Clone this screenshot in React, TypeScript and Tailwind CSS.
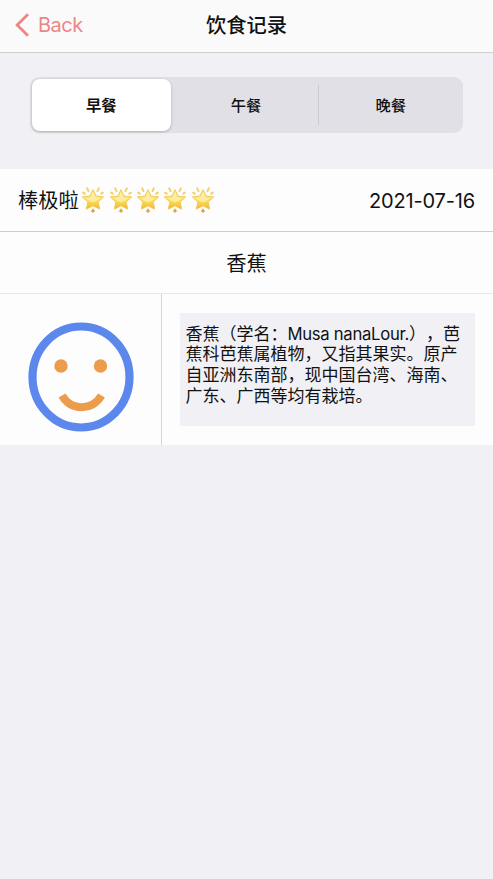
const meals = ['早餐', '午餐', '晚餐'];

const description = [
  <>香蕉（学名：<span className="text-[16.7px] tracking-[-0.3px]">Musa nanaLour.</span>），芭</>,
  '蕉科芭蕉属植物，又指其果实。原产',
  '自亚洲东南部，现中国台湾、海南、',
  '广东、广西等均有栽培。',
];

function GlowingStar() {
  return (
    <svg width="27.3" height="28" viewBox="0 0 27.3 28" className="shrink-0">
      <defs>
        <linearGradient id="star" x1="0" y1="0" x2="0" y2="1">
          <stop offset="0" stopColor="#fff0a0" />
          <stop offset="0.5" stopColor="#fce06a" />
          <stop offset="0.8" stopColor="#f8c93a" />
          <stop offset="1" stopColor="#e9a92e" />
        </linearGradient>
      </defs>
      <g stroke="#efd06a" strokeWidth="2" strokeLinecap="round">
        <path d="M7.2 2.4l1.3 2.7M18.8 2.4l-1.3 2.7M3.2 6.6l1.5 1M22.8 6.6l-1.5 1" />
      </g>
      <path d="M13 22.8l1.6 2.5q-1.6 2.1-3.2 0z" fill="#d9a73a" stroke="#d9a73a" strokeWidth=".8" />
      <path
        d="M13 3.6l3.1 6.4 7.5.9-5.4 5.1 1.5 7.2-6.7-3.5-6.7 3.5 1.5-7.2-5.4-5.1 7.5-.9z"
        fill="url(#star)"
        stroke="#f2cb55"
        strokeWidth="1"
        strokeLinejoin="round"
      />
      <path d="M13 6.5l2 5 5 .8-4 3-3 1.2-3-1.2-4-3 5-.8z" fill="#fff6c4" opacity=".6" />
    </svg>
  );
}

export default function App() {
  return (
    <div className="flex h-[879px] w-[493px] flex-col overflow-hidden bg-[#f0f0f5] font-[Inter,'Noto_Sans_CJK_SC',sans-serif] text-[#111] [text-spacing-trim:space-all]">
      <header className="grid h-[52.5px] shrink-0 grid-cols-[1fr_auto_1fr] items-center border-b border-[#cfcfd2] bg-[#fafafb]">
        <div className="flex items-center pb-[2px] pl-[15px] text-[#ed8685]">
          <svg width="15" height="24" viewBox="0 0 15 24" fill="none" stroke="currentColor" strokeWidth="2.8">
            <path d="M13 1.3L2.2 12 13 22.7" />
          </svg>
          <span className="ml-[8px] text-[20px] tracking-[-0.5px]">Back</span>
        </div>
        <h1 className="text-[20.3px] font-medium leading-[30px]">饮食记录</h1>
      </header>

      <div className="flex h-[116.5px] shrink-0 items-start px-[30px] pt-[24.5px]">
        <div className="flex h-[56px] w-[433px] rounded-[9px] bg-[#e1e0e6] text-[15.3px]">
          {meals.map((meal, i) => (
            <div key={meal} className="flex flex-1 items-center">
              <div
                className={
                  i === 0
                    ? 'ml-[2px] flex h-[52px] w-[138.5px] items-center justify-center rounded-[8px] bg-white pt-[2px] font-bold shadow-[0_1px_3px_rgba(0,0,0,0.22)]'
                    : 'flex flex-1 items-center justify-center pt-[2px] font-medium'
                }
              >
                {meal}
              </div>
              {i === 1 && <div className="h-[40px] w-px bg-[#cbcbd0]" />}
            </div>
          ))}
        </div>
      </div>

      <div className="flex h-[63px] shrink-0 items-center justify-between border-b border-[#cfcfd1] bg-[#fdfdfd] px-[18px]">
        <div className="flex items-center text-[20.3px]">
          <span className="pt-[2px]">棒极啦</span>
          <span className="ml-[1.5px] flex" role="img" aria-label="五星">
            {[0, 1, 2, 3, 4].map((n) => (
              <GlowingStar key={n} />
            ))}
          </span>
        </div>
        <span className="pt-px text-[20px] tracking-[-0.17px]">2021-07-16</span>
      </div>
      <div className="flex h-[62px] shrink-0 items-center justify-center border-b border-[#e7e7e9] bg-[#fdfdfd] pt-[4px] text-[20.3px]">
        香蕉
      </div>

      <div className="flex h-[151px] shrink-0 bg-[#fdfdfd]">
        <div className="flex w-[162px] items-center justify-center border-r border-[#d6d6d9] pt-[15px]">
          <svg width="106" height="110" viewBox="0 0 106 110" fill="none">
            <ellipse cx="53" cy="55" rx="48.5" ry="50.5" stroke="#5c87ec" strokeWidth="8.2" />
            <circle cx="33" cy="44" r="6.7" fill="#ec9d4c" />
            <circle cx="72.5" cy="44" r="6.7" fill="#ec9d4c" />
            <path d="M34 73.5C43 89 64 89 73.5 73.5" stroke="#ec9d4c" strokeWidth="8" />
          </svg>
        </div>
        <div className="ml-[18px] mt-[18.5px] h-[113.5px] w-[295px] bg-[#f0f0f5] pl-[5.5px] pt-[11px] text-[17px] leading-[20.7px]">
          {description.map((line, i) => (
            <div key={i} className="h-[20.7px] whitespace-nowrap">
              {line}
            </div>
          ))}
        </div>
      </div>
    </div>
  );
}
